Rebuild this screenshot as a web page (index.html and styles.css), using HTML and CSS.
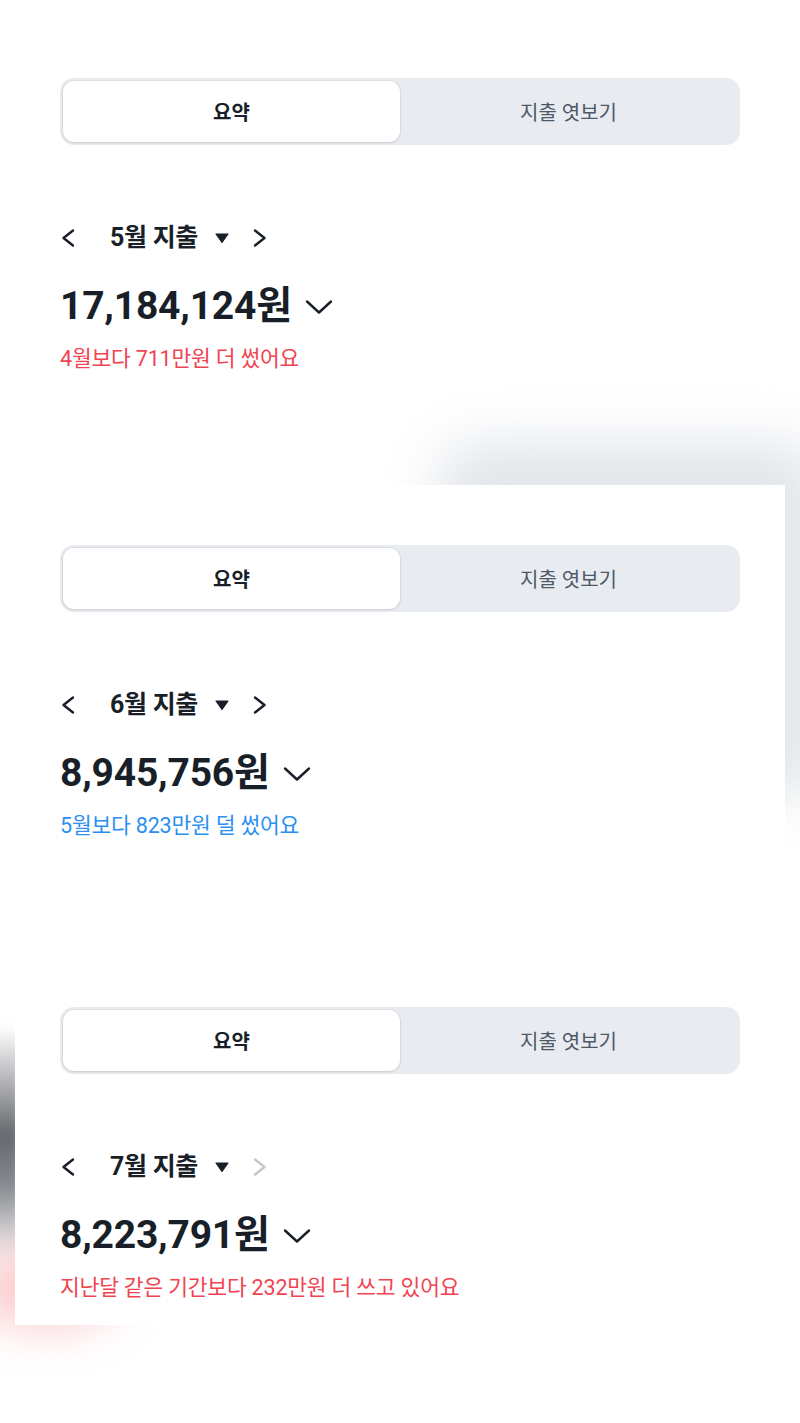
FILE: index.html
```html
<!DOCTYPE html>
<html lang="ko">
<head>
<meta charset="utf-8">
<title>지출 요약</title>
<link rel="stylesheet" href="styles.css">
</head>
<body>
<main class="page">
  <section class="panel panel-first">
    <div class="segment">
      <div class="seg-tab seg-active">요약</div>
      <div class="seg-tab">지출 엿보기</div>
    </div>
    <div class="month-row">
      <svg class="chev-left" width="16" height="20" viewBox="0 0 16 20"><path d="M13 2.5 L3.5 10 L13 17.5" fill="none" stroke="#191f28" stroke-width="2.4" stroke-linecap="round" stroke-linejoin="round"/></svg>
      <span class="month-label">5월 지출</span>
      <svg class="tri" width="14" height="10" viewBox="0 0 14 10"><path d="M1 1 H13 L7 9.5 Z" fill="#191f28" stroke="#191f28" stroke-width="1.2" stroke-linejoin="round"/></svg>
      <svg class="chev-right" width="16" height="20" viewBox="0 0 16 20"><path d="M3 2.5 L12.5 10 L3 17.5" fill="none" stroke="#191f28" stroke-width="2.4" stroke-linecap="round" stroke-linejoin="round"/></svg>
    </div>
    <div class="amount-row">
      <span class="amount">17,184,124원</span>
      <svg class="chev-down" width="28" height="16" viewBox="0 0 28 16"><path d="M2 2.5 L14 13.5 L26 2.5" fill="none" stroke="#191f28" stroke-width="2.4" stroke-linecap="round" stroke-linejoin="round"/></svg>
    </div>
    <p class="compare up">4월보다 711만원 더 썼어요</p>
  </section>

  <section class="panel card card-second">
    <div class="segment">
      <div class="seg-tab seg-active">요약</div>
      <div class="seg-tab">지출 엿보기</div>
    </div>
    <div class="month-row">
      <svg class="chev-left" width="16" height="20" viewBox="0 0 16 20"><path d="M13 2.5 L3.5 10 L13 17.5" fill="none" stroke="#191f28" stroke-width="2.4" stroke-linecap="round" stroke-linejoin="round"/></svg>
      <span class="month-label">6월 지출</span>
      <svg class="tri" width="14" height="10" viewBox="0 0 14 10"><path d="M1 1 H13 L7 9.5 Z" fill="#191f28" stroke="#191f28" stroke-width="1.2" stroke-linejoin="round"/></svg>
      <svg class="chev-right" width="16" height="20" viewBox="0 0 16 20"><path d="M3 2.5 L12.5 10 L3 17.5" fill="none" stroke="#191f28" stroke-width="2.4" stroke-linecap="round" stroke-linejoin="round"/></svg>
    </div>
    <div class="amount-row">
      <span class="amount">8,945,756원</span>
      <svg class="chev-down" width="28" height="16" viewBox="0 0 28 16"><path d="M2 2.5 L14 13.5 L26 2.5" fill="none" stroke="#191f28" stroke-width="2.4" stroke-linecap="round" stroke-linejoin="round"/></svg>
    </div>
    <p class="compare down">5월보다 823만원 덜 썼어요</p>
  </section>

  <section class="panel card card-third">
    <div class="segment">
      <div class="seg-tab seg-active">요약</div>
      <div class="seg-tab">지출 엿보기</div>
    </div>
    <div class="month-row">
      <svg class="chev-left" width="16" height="20" viewBox="0 0 16 20"><path d="M13 2.5 L3.5 10 L13 17.5" fill="none" stroke="#191f28" stroke-width="2.4" stroke-linecap="round" stroke-linejoin="round"/></svg>
      <span class="month-label">7월 지출</span>
      <svg class="tri" width="14" height="10" viewBox="0 0 14 10"><path d="M1 1 H13 L7 9.5 Z" fill="#191f28" stroke="#191f28" stroke-width="1.2" stroke-linejoin="round"/></svg>
      <svg class="chev-right" width="16" height="20" viewBox="0 0 16 20"><path d="M3 2.5 L12.5 10 L3 17.5" fill="none" stroke="#c4c8ce" stroke-width="2.4" stroke-linecap="round" stroke-linejoin="round"/></svg>
    </div>
    <div class="amount-row">
      <span class="amount">8,223,791원</span>
      <svg class="chev-down" width="28" height="16" viewBox="0 0 28 16"><path d="M2 2.5 L14 13.5 L26 2.5" fill="none" stroke="#191f28" stroke-width="2.4" stroke-linecap="round" stroke-linejoin="round"/></svg>
    </div>
    <p class="compare up">지난달 같은 기간보다 232만원 더 쓰고 있어요</p>
  </section>
</main>
</body>
</html>
```

FILE: styles.css
```css
html {
  margin: 0;
  padding: 0;
  background: #ffffff;
}

body {
  margin: 0;
  padding: 0;
  font-family: Roboto, "Noto Sans CJK KR", "Noto Sans", sans-serif;
  color: #191f28;
  width: 800px;
  height: 1423px;
  overflow: hidden;
}

.page {
  display: flex;
  flex-direction: column;
}

.panel {
  box-sizing: border-box;
  display: flex;
  flex-direction: column;
}

.panel-first {
  height: 485px;
  padding: 78px 60px 0 60px;
}

.card {
  position: relative;
  margin: 0 15px;
  padding: 60px 45px 0 45px;
  background: #ffffff;
}

.card-second {
  height: 462px;
}

.card-third {
  height: 378px;
}

/* decorative blurred shadows from the stacked screenshots */
.card-second::before {
  content: "";
  position: absolute;
  z-index: -1;
  top: -45px;
  left: 420px;
  right: -40px;
  height: 360px;
  background: #e3e6ea;
  border-radius: 50px;
  filter: blur(26px);
}

.card-third::before {
  content: "";
  position: absolute;
  z-index: -1;
  left: -40px;
  width: 48px;
  top: 80px;
  height: 240px;
  background: linear-gradient(to bottom, rgba(100,103,108,0) 0%, #65686d 45%, #85888d 65%, rgba(140,143,148,0) 100%);
  filter: blur(6px);
}

.card-third::after {
  content: "";
  position: absolute;
  z-index: -1;
  left: -45px;
  width: 150px;
  top: 300px;
  height: 80px;
  background: #fbc9cc;
  border-radius: 50%;
  filter: blur(24px);
}

.segment {
  box-sizing: border-box;
  height: 67px;
  width: 680px;
  padding: 3px;
  border-radius: 14px;
  background: #e8ebef;
  display: grid;
  grid-template-columns: 1fr 1fr;
}

.seg-tab {
  display: flex;
  align-items: center;
  justify-content: center;
  font-size: 20px;
  color: #4e5968;
  border-radius: 11px;
}

.seg-active {
  background: #ffffff;
  color: #191f28;
  font-weight: 700;
  box-shadow: 0 0 0 1px rgba(0, 0, 0, 0.04), 0 1px 3px rgba(0, 0, 0, 0.10);
}

.month-row {
  display: flex;
  align-items: center;
  height: 28px;
  margin-top: 79px;
}

.chev-left {
  display: block;
}

.month-label {
  font-size: 25px;
  font-weight: 700;
  line-height: 28px;
  margin-left: 34px;
  letter-spacing: -0.3px;
}

.tri {
  display: block;
  margin-left: 17px;
}

.chev-right {
  display: block;
  margin-left: 23px;
}

.amount-row {
  display: flex;
  align-items: center;
  height: 46px;
  margin-top: 31px;
}

.amount {
  font-size: 39px;
  font-weight: 700;
  line-height: 46px;
  letter-spacing: -0.2px;
}

.chev-down {
  display: block;
  margin-left: 13px;
  margin-top: 2px;
}

.compare {
  margin: 17px 0 0 0;
  font-size: 21.5px;
  line-height: 26px;
  letter-spacing: -0.2px;
}

.up {
  color: #f04452;
}

.down {
  color: #2b8ff0;
}
```
